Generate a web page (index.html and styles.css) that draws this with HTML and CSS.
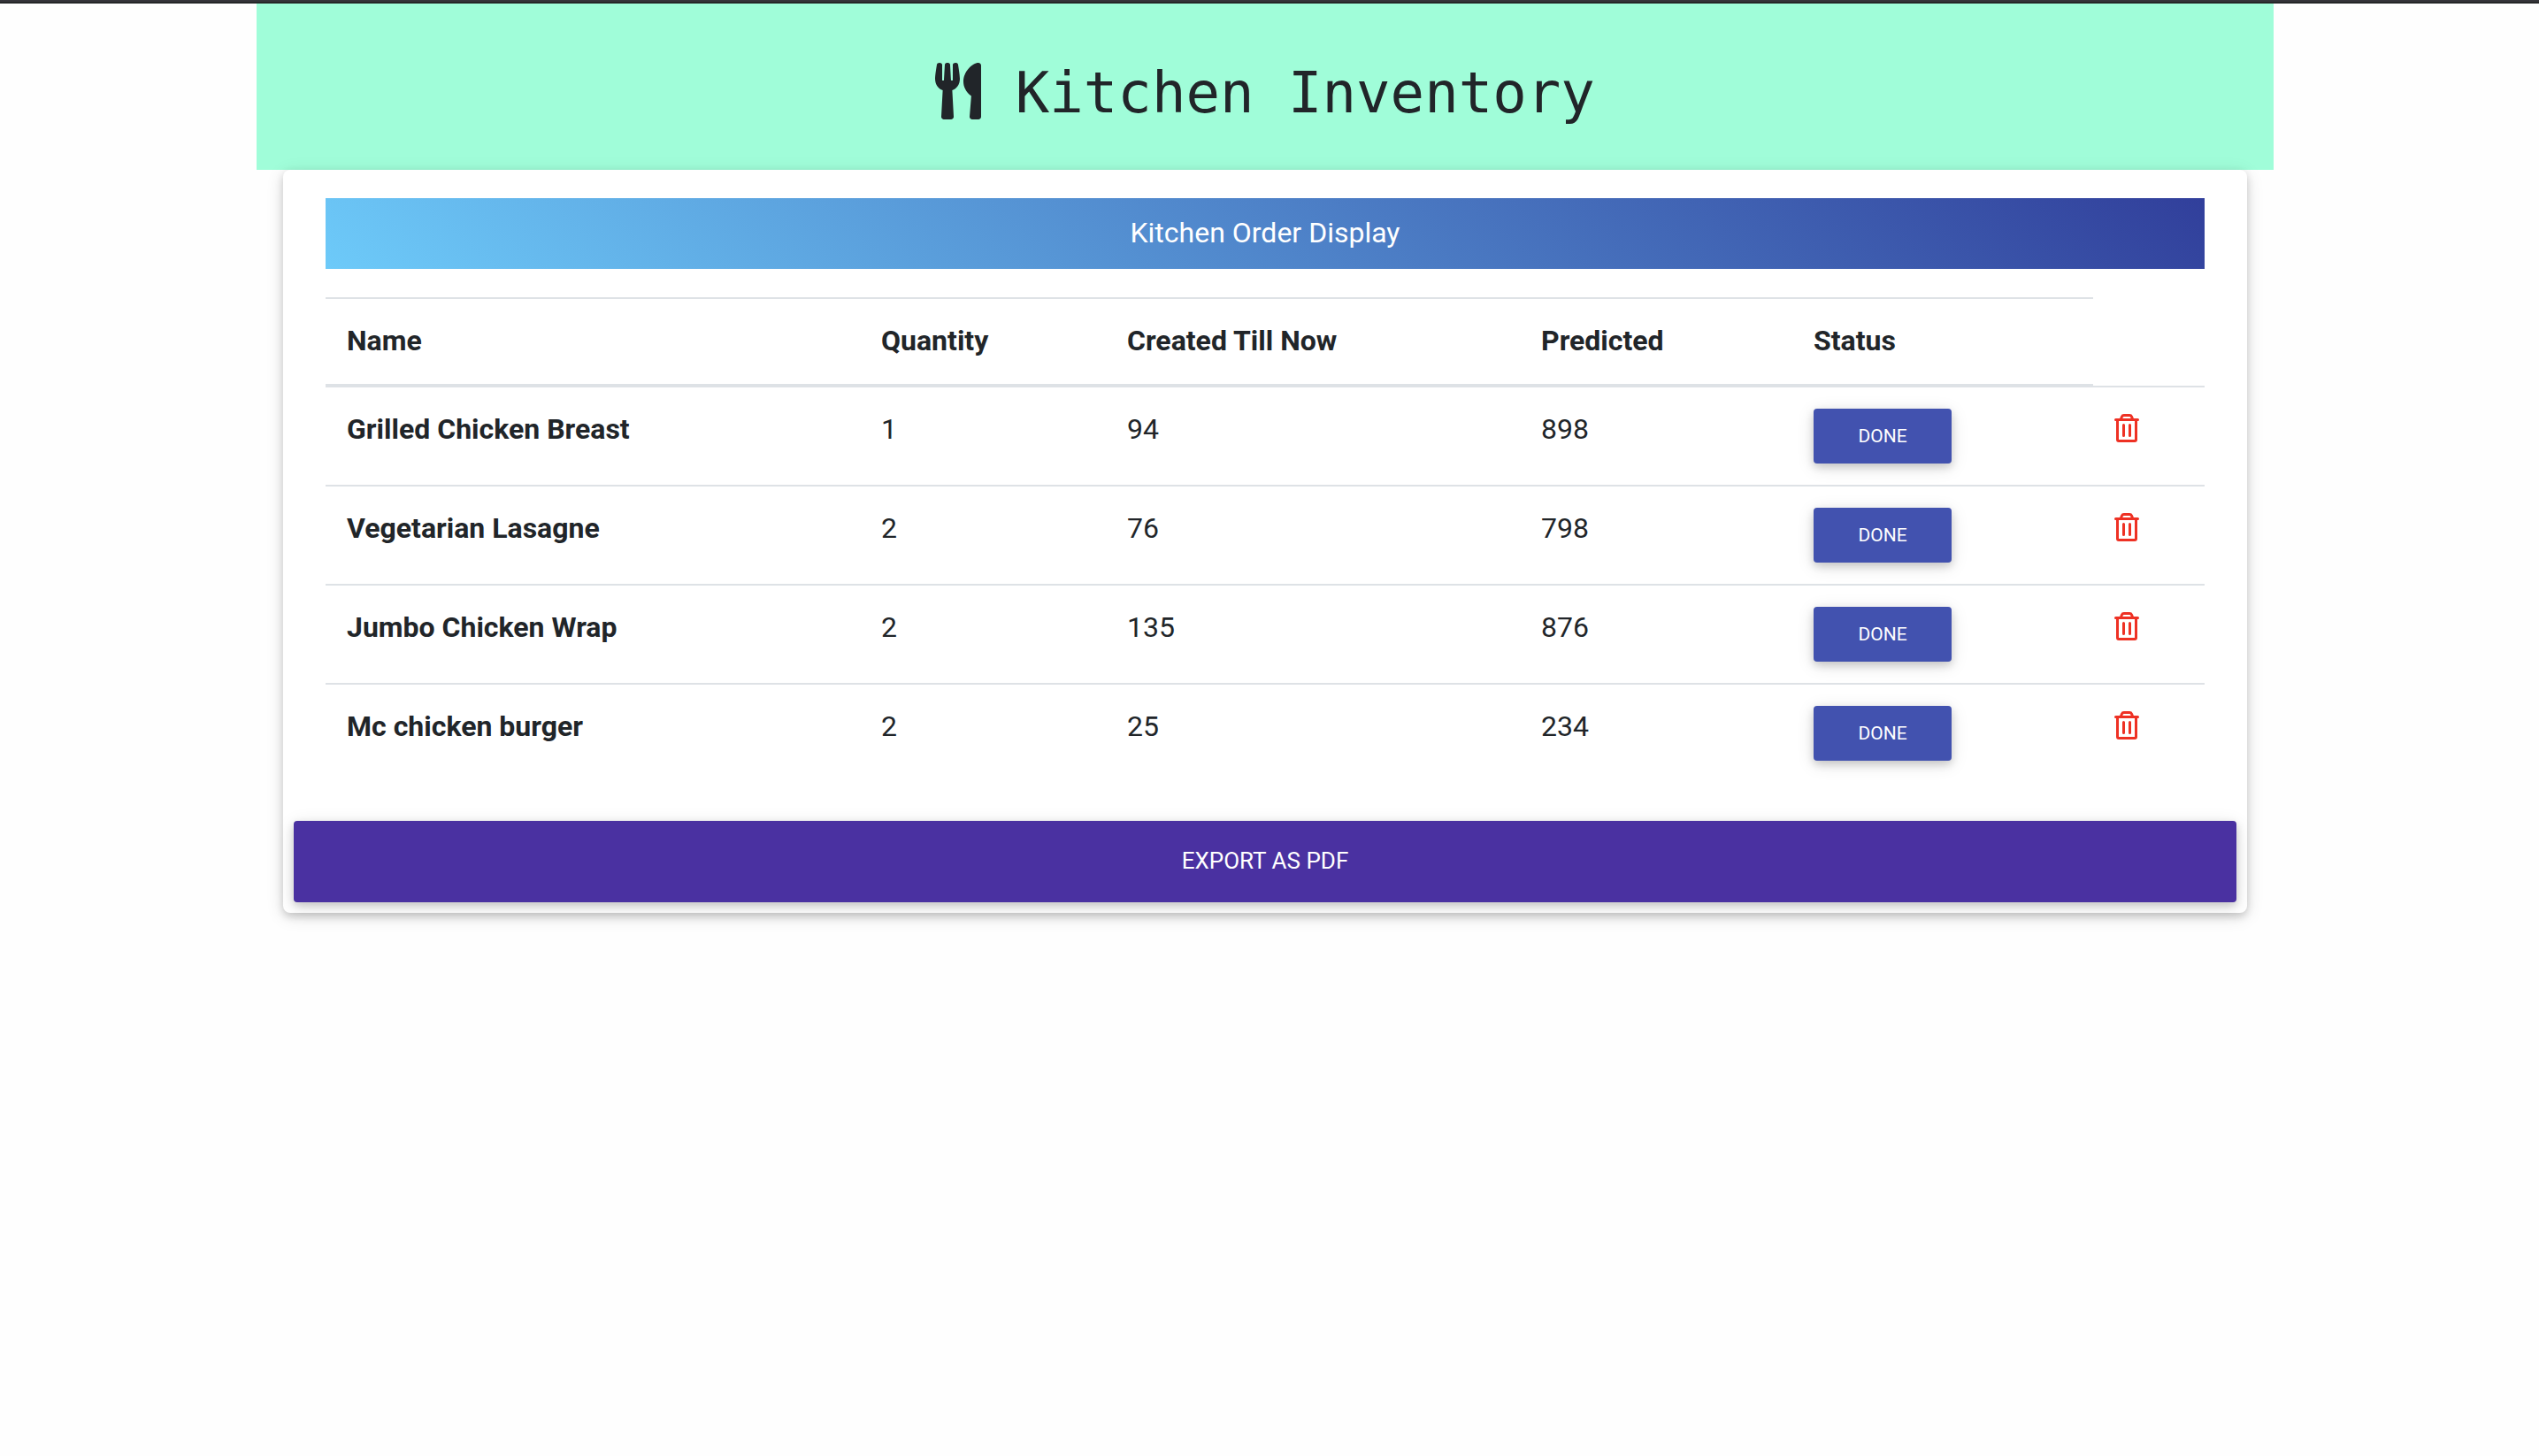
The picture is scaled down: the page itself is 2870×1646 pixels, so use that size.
FILE: index.html
```html
<!DOCTYPE html>
<html lang="en">
<head>
<meta charset="utf-8">
<title>Kitchen Inventory</title>
<link rel="stylesheet" href="styles.css">
</head>
<body>
<svg class="sprite" aria-hidden="true">
  <symbol id="trash" viewBox="0 0 28 32">
    <path fill="none" stroke="currentColor" stroke-width="3" d="M3.500 7.500V29a1.500 1.500 0 0 0 1.500 1.500h18a1.500 1.500 0 0 0 1.500-1.500V7.500M7.500 5.500l1-2.500q.600-1.500 2.300-1.500h6.400q1.700 0 2.300 1.500l1 2.500"/>
    <path fill="none" stroke="currentColor" stroke-width="3" stroke-linecap="round" d="M1.500 6.500h25M10.500 12.500v12M17.500 12.500v12"/>
  </symbol>
</svg>
<div class="container">
  <header class="masthead">
    <h1 class="title"><svg class="title-icon" viewBox="0 0 416 512" aria-hidden="true"><path fill="currentColor" d="M207.900 15.200c.800 4.700 16.100 94.500 16.100 128.800 0 52.300-27.800 89.600-68.900 104.600L168 486.700c.700 13.700-10.200 25.300-24 25.300H80c-13.700 0-24.700-11.500-24-25.300l12.900-238.100C27.700 233.600 0 196.200 0 144 0 109.600 15.300 19.900 16.100 15.200 19.300-5.100 61.400-5.400 64 16.300v141.200c1.300 3.400 15.100 3.200 16 0 1.400-25.300 7.900-139.200 8-141.800 3.300-20.800 44.700-20.800 47.900 0 .200 2.700 6.600 116.500 8 141.800.900 3.200 14.800 3.400 16 0V16.300c2.600-21.600 44.800-21.400 48-1.100zm119.200 285.700l-15 185.100c-1.200 14 9.900 26 23.900 26h56c13.300 0 24-10.700 24-24V24c0-13.200-10.700-24-24-24-82.500 0-221.400 178.500-64.900 300.900z"/></svg> Kitchen Inventory</h1>
  </header>
  <main class="card">
    <h2 class="banner">Kitchen Order Display</h2>
    <table class="orders">
      <colgroup><col class="c-name"><col class="c-qty"><col class="c-created"><col class="c-predicted"><col class="c-status"><col class="c-remove"></colgroup>
      <thead>
        <tr><th scope="col">Name</th><th scope="col">Quantity</th><th scope="col">Created Till Now</th><th scope="col">Predicted</th><th scope="col">Status</th><td></td></tr>
      </thead>
      <tbody>
        <tr><th scope="row">Grilled Chicken Breast</th><td>1</td><td>94</td><td>898</td><td><button class="btn done" type="button">DONE</button></td><td><button class="remove" type="button" aria-label="Remove"><svg class="trash"><use href="#trash"/></svg></button></td></tr>
        <tr><th scope="row">Vegetarian Lasagne</th><td>2</td><td>76</td><td>798</td><td><button class="btn done" type="button">DONE</button></td><td><button class="remove" type="button" aria-label="Remove"><svg class="trash"><use href="#trash"/></svg></button></td></tr>
        <tr><th scope="row">Jumbo Chicken Wrap</th><td>2</td><td>135</td><td>876</td><td><button class="btn done" type="button">DONE</button></td><td><button class="remove" type="button" aria-label="Remove"><svg class="trash"><use href="#trash"/></svg></button></td></tr>
        <tr><th scope="row">Mc chicken burger</th><td>2</td><td>25</td><td>234</td><td><button class="btn done" type="button">DONE</button></td><td><button class="remove" type="button" aria-label="Remove"><svg class="trash"><use href="#trash"/></svg></button></td></tr>
      </tbody>
    </table>
    <button class="btn export" type="button">EXPORT AS PDF</button>
  </main>
</div>
</body>
</html>
```
FILE: styles.css
```css
* { box-sizing: border-box; }

body {
  margin: 0;
  min-height: 100vh;
  padding-right: 10px;
  background: #fefefe;
  color: #212529;
  font: 400 32px/46px Roboto, sans-serif;
}

body::before {
  content: "";
  display: block;
  height: 4px;
  margin-right: -10px;
  background: linear-gradient(#35353a 50%, #252728 50%);
}

.sprite { display: none; }

.container {
  max-width: 2280px;
  margin: 0 auto;
}

.masthead {
  padding: 63px 30px 48px;
  background: #a0fdd9;
}

.title {
  margin: 0;
  font: 400 64px/77px "DejaVu Sans Mono", monospace;
  text-align: center;
}

.title-icon {
  width: 52px;
  height: 64px;
  vertical-align: -8px;
}

.card {
  position: relative;
  margin: 0 30px;
  padding: 32px 12px 12px;
  border-radius: 8px;
  background: #fff;
  box-shadow: 0 4px 10px rgba(0, 0, 0, .16), 0 4px 20px rgba(0, 0, 0, .12);
}

.banner {
  margin: 0 36px 32px;
  padding: 16px 16px 18px;
  background: linear-gradient(40deg, #6dcaf9, #313f9b);
  color: #fff;
  font-size: 32px;
  font-weight: 400;
  text-align: center;
}

.orders {
  width: calc(100% - 72px);
  margin: 0 36px 44px;
  border-spacing: 0;
  table-layout: fixed;
}

.c-name { width: 604px; }
.c-qty { width: 278px; }
.c-created { width: 468px; }
.c-predicted { width: 308px; }
.c-status { width: 340px; }
.c-remove { width: 126px; }

.orders th,
.orders td {
  padding: 24px;
  text-align: left;
  vertical-align: top;
}

.orders th { font-weight: 700; }

.orders thead th {
  padding-bottom: 26px;
  border-top: 2px solid #dee2e6;
  border-bottom: 4px solid #dee2e6;
}

.orders thead td { border-bottom: 2px solid #dee2e6; }

.orders tbody tr + tr > * { border-top: 2px solid #dee2e6; }

.btn {
  display: block;
  border: 0;
  border-radius: 4px;
  color: #fff;
  font-family: inherit;
  text-align: center;
  box-shadow: 0 4px 10px rgba(0, 0, 0, .16), 0 4px 20px rgba(0, 0, 0, .12);
}

.done {
  width: 156px;
  padding: 16px;
  background: #4252af;
  font-size: 21px;
  line-height: 30px;
}

.export {
  width: 100%;
  padding: 26px 26px 28px;
  background: #4a31a1;
  font-size: 26px;
  line-height: 38px;
}

.remove {
  display: block;
  padding: 6px 0;
  border: 0;
  background: none;
  color: #ee3124;
}

.trash {
  display: block;
  width: 28px;
  height: 32px;
}
```
